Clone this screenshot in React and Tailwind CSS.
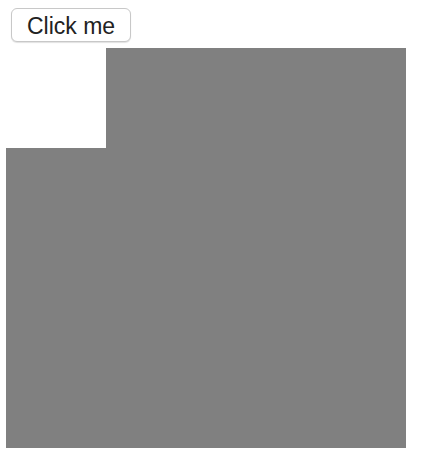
export default function App() {
  return (
    <div className="bg-white p-[6px] font-['Liberation_Sans',Arial,sans-serif]">
      <button className="ml-[5px] mt-[2px] flex h-[34px] w-[120px] items-center justify-center rounded-[6px] border border-[#c8c8c8] bg-white pt-[2px] text-[23px] text-[#222] shadow-[0_1px_1px_rgba(0,0,0,0.12)]">
        Click me
      </button>
      <div className="mt-[6px] flex flex-col">
        <div className="ml-[100px] h-[100px] w-[300px] bg-[#808080]" />
        <div className="h-[300px] w-[400px] bg-[#808080]" />
      </div>
    </div>
  );
}
